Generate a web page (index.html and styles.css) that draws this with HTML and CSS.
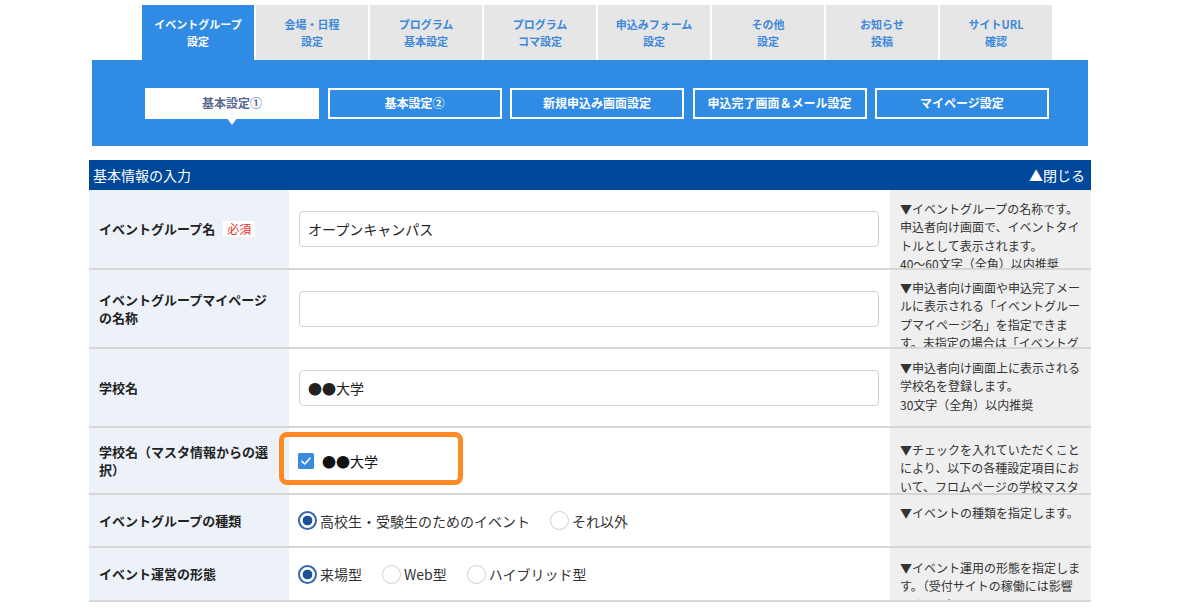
FILE: index.html
```html
<!DOCTYPE html>
<html lang="ja">
<head>
<meta charset="utf-8">
<title>基本情報の入力</title>
<link rel="stylesheet" href="styles.css">
</head>
<body>
<nav class="tabs">
  <div class="tab tab--active">イベントグループ<br>設定</div>
  <div class="tab">会場・日程<br>設定</div>
  <div class="tab">プログラム<br>基本設定</div>
  <div class="tab">プログラム<br>コマ設定</div>
  <div class="tab">申込みフォーム<br>設定</div>
  <div class="tab">その他<br>設定</div>
  <div class="tab">お知らせ<br>投稿</div>
  <div class="tab">サイトURL<br>確認</div>
</nav>
<div class="subnav">
  <div class="subtab subtab--active">基本設定①</div>
  <div class="subtab">基本設定②</div>
  <div class="subtab">新規申込み画面設定</div>
  <div class="subtab">申込完了画面＆メール設定</div>
  <div class="subtab">マイページ設定</div>
</div>
<section class="panel">
  <header class="panel-head">
    <span>基本情報の入力</span>
    <span class="panel-close">▲閉じる</span>
  </header>

  <div class="row row--1">
    <div class="label">イベントグループ名<span class="req">必須</span></div>
    <div class="field"><input class="input" type="text" value="オープンキャンパス"></div>
    <div class="help help--1">▼イベントグループの名称です。申込者向け画面で、イベントタイトルとして表示されます。<br>40〜60文字（全角）以内推奨</div>
  </div>

  <div class="row row--2">
    <div class="label">イベントグループマイページの名称</div>
    <div class="field"><input class="input" type="text" value=""></div>
    <div class="help help--2">▼申込者向け画面や申込完了メールに表示される「イベントグループマイページ名」を指定できます。未指定の場合は「イベントグループ名」が表示されます。</div>
  </div>

  <div class="row row--3">
    <div class="label">学校名</div>
    <div class="field"><input class="input" type="text" value="●●大学"></div>
    <div class="help help--3">▼申込者向け画面上に表示される学校名を登録します。<br>30文字（全角）以内推奨</div>
  </div>

  <div class="row row--4">
    <div class="label">学校名（マスタ情報からの選択）</div>
    <div class="field field--check">
      <span class="check">
        <svg width="16" height="16" viewBox="0 0 16 16"><rect x="0" y="0" width="16" height="16" rx="1.5" fill="#3b8ae0"/><path d="M4 8.3 L6.8 11 L12 5.2" fill="none" stroke="#fff" stroke-width="1.6" stroke-linecap="round" stroke-linejoin="round"/></svg>
      </span>
      <span class="check-text">●●大学</span>
      <span class="highlight"></span>
    </div>
    <div class="help help--4">▼チェックを入れていただくことにより、以下の各種設定項目において、フロムページの学校マスタ情報が反映されます。</div>
  </div>

  <div class="row row--5">
    <div class="label">イベントグループの種類</div>
    <div class="field field--radios">
      <span class="opt"><span class="radio radio--on"></span>高校生・受験生のためのイベント</span>
      <span class="opt"><span class="radio"></span>それ以外</span>
    </div>
    <div class="help help--5">▼イベントの種類を指定します。</div>
  </div>

  <div class="row row--6">
    <div class="label">イベント運営の形態</div>
    <div class="field field--radios">
      <span class="opt"><span class="radio radio--on"></span>来場型</span>
      <span class="opt"><span class="radio"></span>Web型</span>
      <span class="opt"><span class="radio"></span>ハイブリッド型</span>
    </div>
    <div class="help help--6">▼イベント運用の形態を指定します。（受付サイトの稼働には影響しません）</div>
  </div>
</section>
</body>
</html>
```

FILE: styles.css
```css
* { box-sizing: border-box; margin: 0; padding: 0; }

body {
  font-family: "Noto Sans CJK JP", "Noto Sans", sans-serif;
  background: #fff;
  color: #222;
  width: 1181px;
  height: 611px;
  overflow: hidden;
}

/* top tabs */
.tabs {
  display: flex;
  gap: 2px;
  margin-left: 142px;
  padding-top: 5px;
}
.tab {
  width: 112px;
  height: 55px;
  background: #e6e6e6;
  color: #3d88db;
  font-size: 11px;
  font-weight: 700;
  line-height: 17px;
  display: flex;
  align-items: center;
  justify-content: center;
  text-align: center;
}
.tab--active { background: #2f8be3; color: #fff; }

/* sub navigation */
.subnav {
  margin-left: 92px;
  width: 996px;
  height: 86px;
  background: #2f8be3;
  display: flex;
  gap: 8.5px;
  padding: 28px 0 0 53px;
}
.subtab {
  position: relative;
  width: 174px;
  height: 31px;
  border: 2px solid #fff;
  color: #fff;
  font-size: 12px;
  font-weight: 700;
  display: flex;
  align-items: center;
  justify-content: center;
  padding-bottom: 2px;
}
.subtab--active { background: #fff; color: #5a6a8f; }
.subtab--active::after {
  content: "";
  position: absolute;
  left: 50%;
  top: 100%;
  margin-left: -6px;
  border-left: 6px solid transparent;
  border-right: 6px solid transparent;
  border-top: 8px solid #fff;
}

/* panel */
.panel {
  margin: 14px 0 0 89px;
  width: 1002px;
}
.panel-head {
  height: 30px;
  background: #00489a;
  color: #fff;
  font-size: 14px;
  display: flex;
  justify-content: space-between;
  align-items: center;
  padding: 0 6px 1px 4px;
}

.row {
  display: grid;
  grid-template-columns: 200px 601px 201px;
  border-bottom: 2px solid #d6d6d6;
}
.row--1 { height: 80px; }
.row--2 { height: 79px; }
.row--3 { height: 79px; }
.row--4 { height: 67px; }
.row--5 { height: 53px; }
.row--6 { height: 54px; }

.label {
  background: #edf2f9;
  padding: 0 20px 0 10px;
  display: flex;
  align-items: center;
  flex-wrap: wrap;
  align-content: center;
  font-size: 13px;
  font-weight: 700;
  line-height: 18px;
  color: #222;
}
.req {
  margin-left: 8px;
  background: #fff;
  color: #e8302c;
  font-size: 12px;
  font-weight: 400;
  line-height: 16px;
  padding: 0 4px;
}

.field {
  position: relative;
  display: flex;
  align-items: center;
  padding-left: 10px;
  background: #fff;
}
.input {
  width: 580px;
  height: 36px;
  border: 1.5px solid #d0d0d0;
  border-radius: 4px;
  padding: 0 8px;
  font-family: inherit;
  font-size: 14px;
  color: #222;
  background: #fff;
  outline: none;
}

.field--check { padding-left: 9px; }
.check { display: flex; width: 16px; height: 16px; }
.check-text { margin-left: 8px; font-size: 14px; color: #111; }
.highlight {
  position: absolute;
  left: -10px;
  top: 4px;
  width: 184px;
  height: 53px;
  border: 5px solid #fd8824;
  border-radius: 8px;
}

.field--radios { padding-left: 9px; gap: 20px; font-size: 14px; color: #333; }
.opt { display: flex; align-items: center; gap: 3px; }
.radio {
  width: 19px;
  height: 19px;
  border-radius: 50%;
  border: 1.5px solid #cfcfcf;
  background: #fff;
}
.radio--on {
  border: 2px solid #3467ae;
  background: radial-gradient(circle, #1d4f9b 0 4.5px, #fff 5.2px);
}

.help {
  background: #efefef;
  font-size: 12px;
  line-height: 18.4px;
  color: #333;
  padding: 9px 10px 0 10px;
  overflow: hidden;
}
.help--1 { padding-top: 10px; }
.help--2 { padding-top: 9px; }
.help--3 { padding-top: 10px; }
.help--4 { padding-top: 13px; }
.help--5 { padding-top: 9px; }
.help--6 { padding-top: 11px; }
```
